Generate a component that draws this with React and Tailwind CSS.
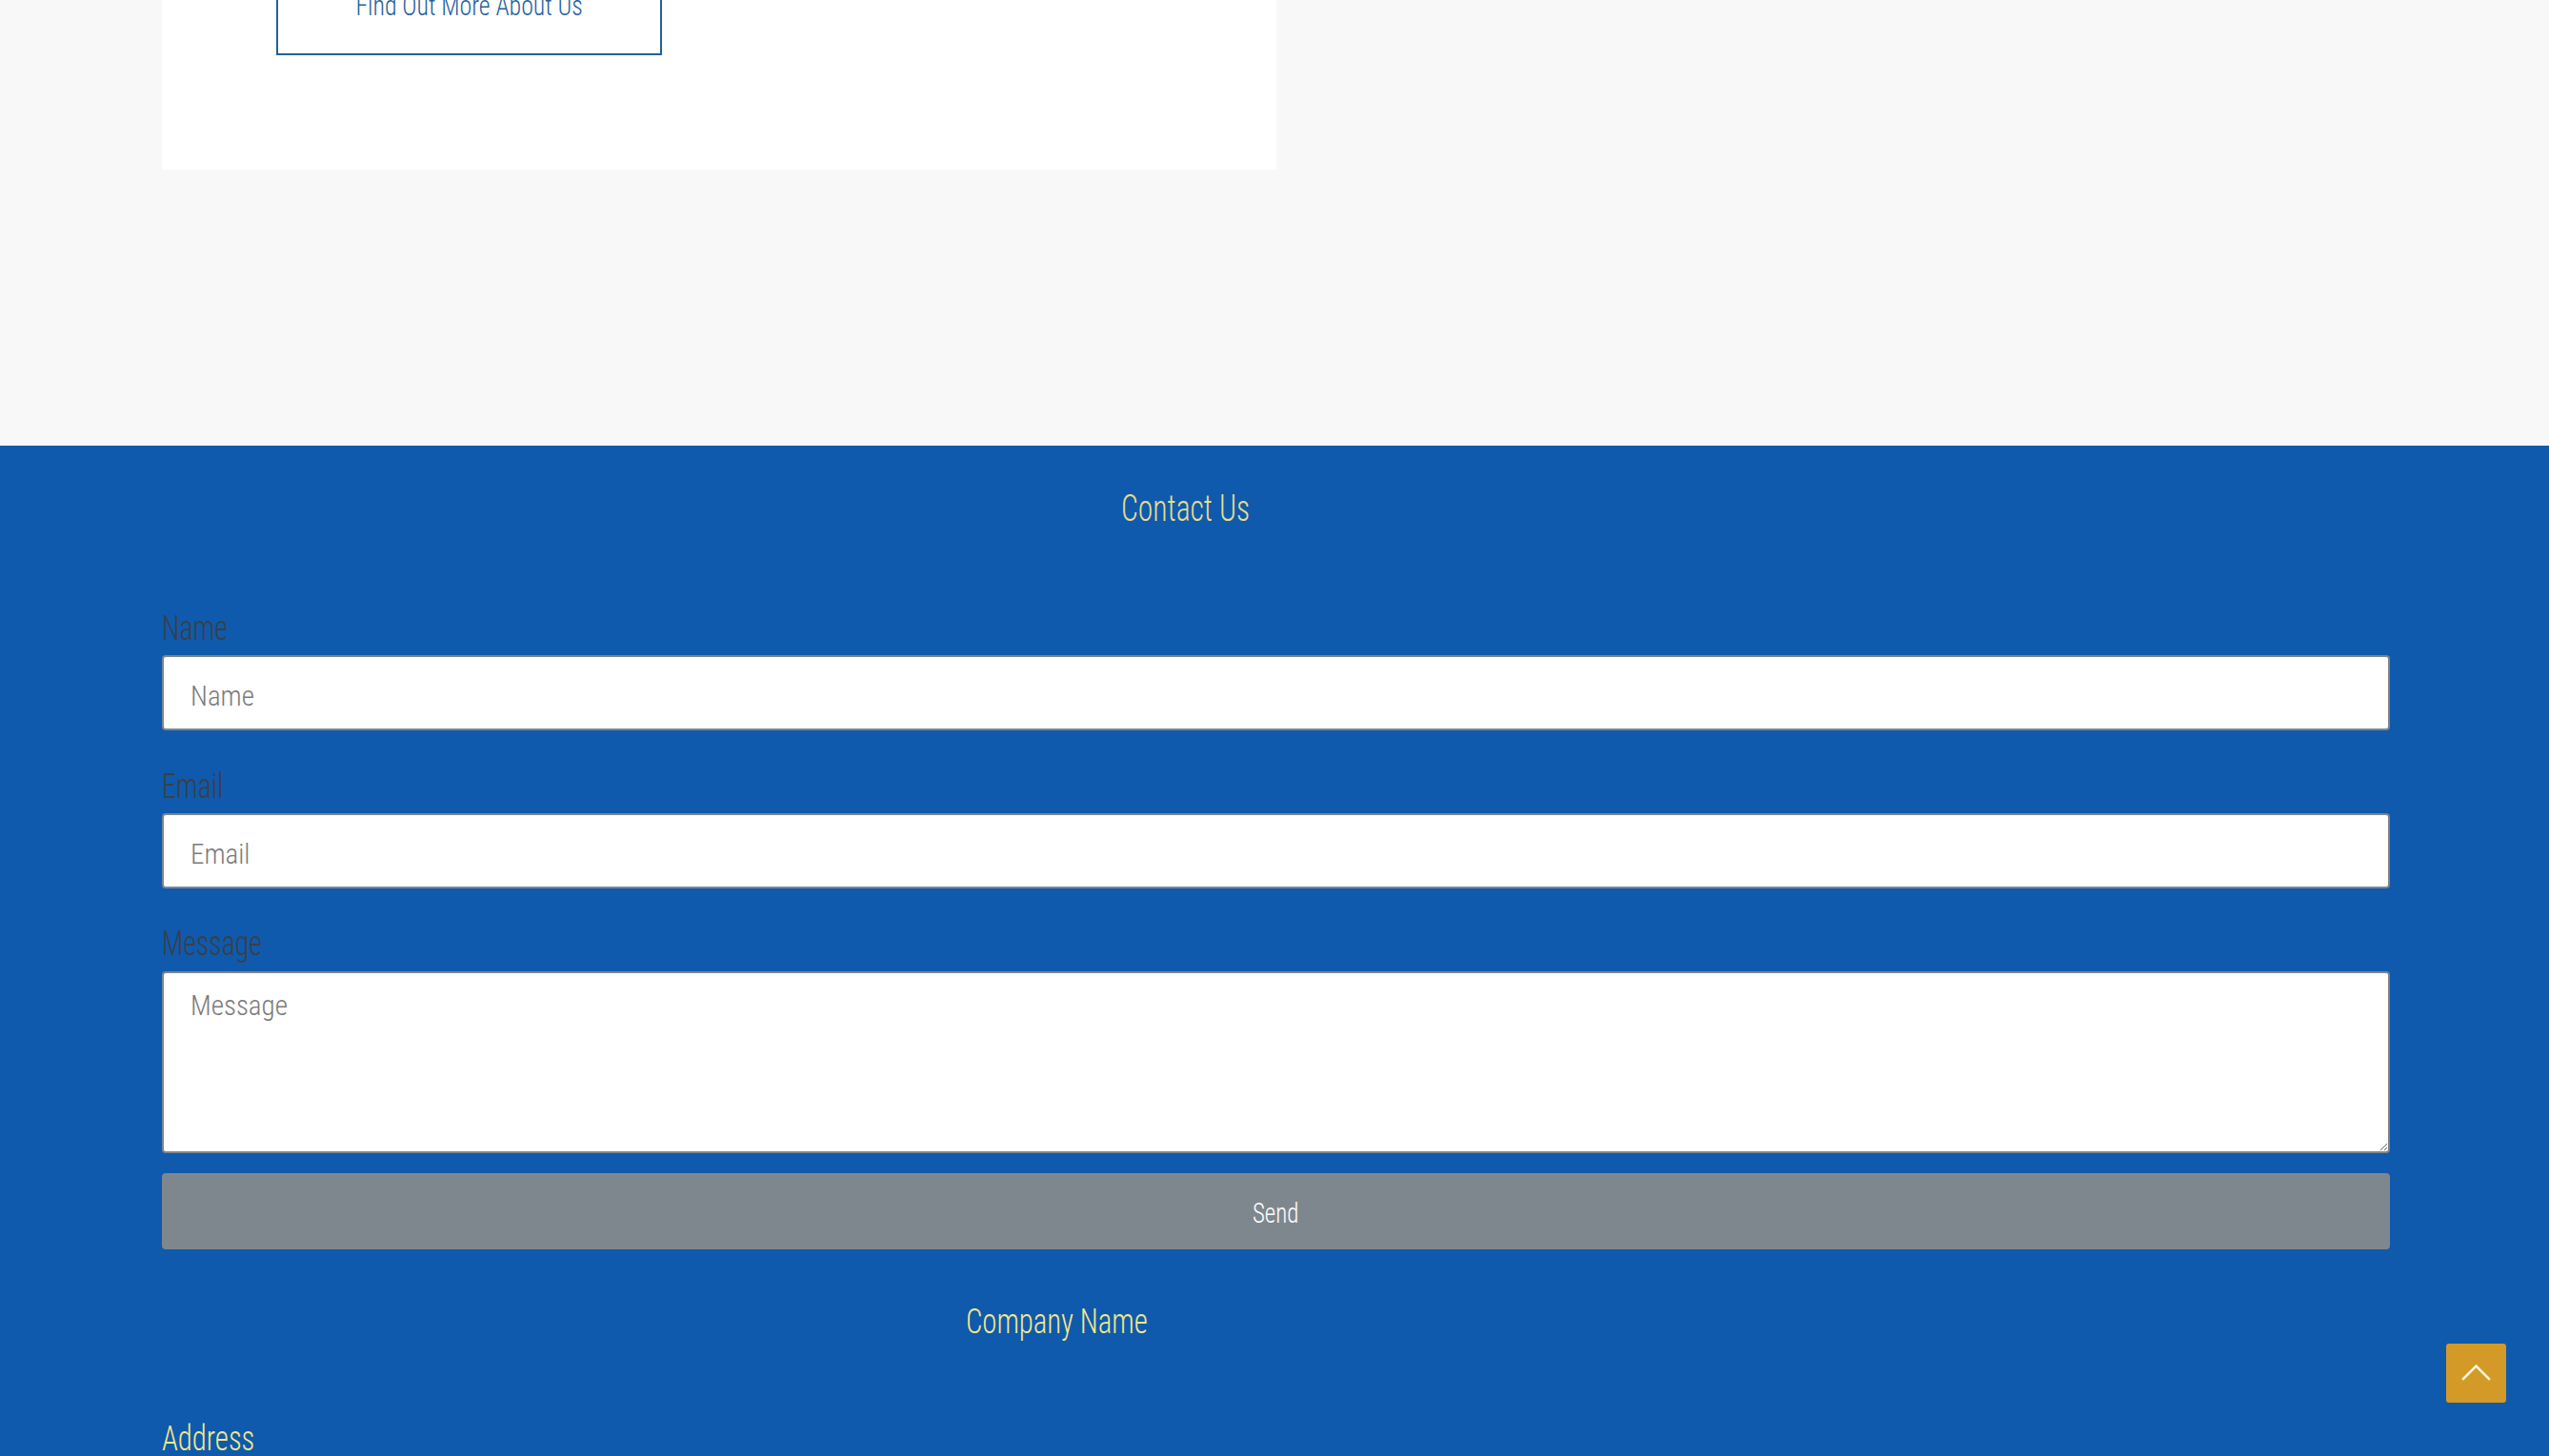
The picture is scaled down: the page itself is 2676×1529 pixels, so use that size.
export default function App() {
  const font = "font-['Roboto_Condensed','Open_Sans','DejaVu_Sans_Condensed',sans-serif] font-stretch-condensed font-light";
  const sx = "inline-block origin-left scale-x-[0.83] whitespace-nowrap";
  return (
    <div className={`min-h-screen w-full overflow-hidden bg-[#f9f8f8] ${font}`}>
      {/* top section (scrolled) */}
      <div className="-mt-[142px] pb-[290px] pl-[170px] pr-[167px]">
        <div className="w-[1170px] bg-white pt-[100px] pb-[120px] pl-[120px]">
          <a className="flex h-[100px] w-[405px] items-center justify-center border-2 border-[#23609c] pb-[5px] text-[30px] leading-none text-[#23609c]">
            <span className="inline-block origin-center scale-x-[0.86] whitespace-nowrap">Find Out More About Us</span>
          </a>
        </div>
      </div>

      {/* contact section */}
      <div className="bg-[#0f5aac] pl-[170px] pr-[167px] pt-[46px] pb-[200px]">
        <h2 className="ml-[1007px] h-[40px] text-[38px] leading-[40px] font-light text-[#e7dd8d]">
          <span className={sx}>Contact Us</span>
        </h2>

        <form className="mt-[86px]" onSubmit={(e) => e.preventDefault()}>
          <label className="block h-[40px] text-[36px] leading-[40px] text-[#3b3f45]">
            <span className={sx}>Name</span>
          </label>
          <input
            type="text"
            placeholder="Name"
            className="mt-[8px] block h-[79px] w-full rounded-[4px] border-2 border-[#7d8690] bg-white px-[28px] pt-[6px] text-[29px] font-light text-[#333] placeholder:text-[#7a7a7a] outline-none"
          />

          <label className="mt-[39px] block h-[40px] text-[36px] leading-[40px] text-[#3b3f45]">
            <span className={sx}>Email</span>
          </label>
          <input
            type="email"
            placeholder="Email"
            className="mt-[8px] block h-[79px] w-full rounded-[4px] border-2 border-[#7d8690] bg-white px-[28px] pt-[6px] text-[29px] font-light text-[#333] placeholder:text-[#7a7a7a] outline-none"
          />

          <label className="mt-[38px] block h-[40px] text-[36px] leading-[40px] text-[#3b3f45]">
            <span className={sx}>Message</span>
          </label>
          <textarea
            placeholder="Message"
            className="mt-[9px] block h-[191px] w-full rounded-[4px] border-2 border-[#7d8690] bg-white px-[28px] pt-[14px] text-[29px] font-light leading-[40px] text-[#333] placeholder:text-[#7a7a7a] outline-none"
          />

          <button
            type="submit"
            className="mt-[21px] flex h-[80px] w-full items-center justify-center rounded-[4px] bg-[#7f878e] pt-[4px] text-[30px] font-light leading-none text-white"
          >
            <span className="inline-block origin-center scale-x-[0.83]">Send</span>
          </button>
        </form>

        <h3 className="mt-[56px] ml-[844px] h-[40px] text-[37px] leading-[40px] font-light text-[#f3e98a]">
          <span className={sx}>Company Name</span>
        </h3>

        <h3 className="mt-[83px] h-[40px] text-[37px] leading-[40px] font-light text-[#f3e98a]">
          <span className={sx}>Address</span>
        </h3>
      </div>

      {/* scroll to top */}
      <a className="fixed right-[45px] bottom-[56px] flex h-[62px] w-[63px] items-center justify-center rounded-[3px] bg-[#d49a27]">
        <svg width="63" height="62" viewBox="0 0 63 62" fill="none">
          <polyline points="18,37 31.5,23.5 45,37" stroke="#fff6dc" strokeWidth="2.5" strokeLinecap="square" />
        </svg>
      </a>
    </div>
  );
}
